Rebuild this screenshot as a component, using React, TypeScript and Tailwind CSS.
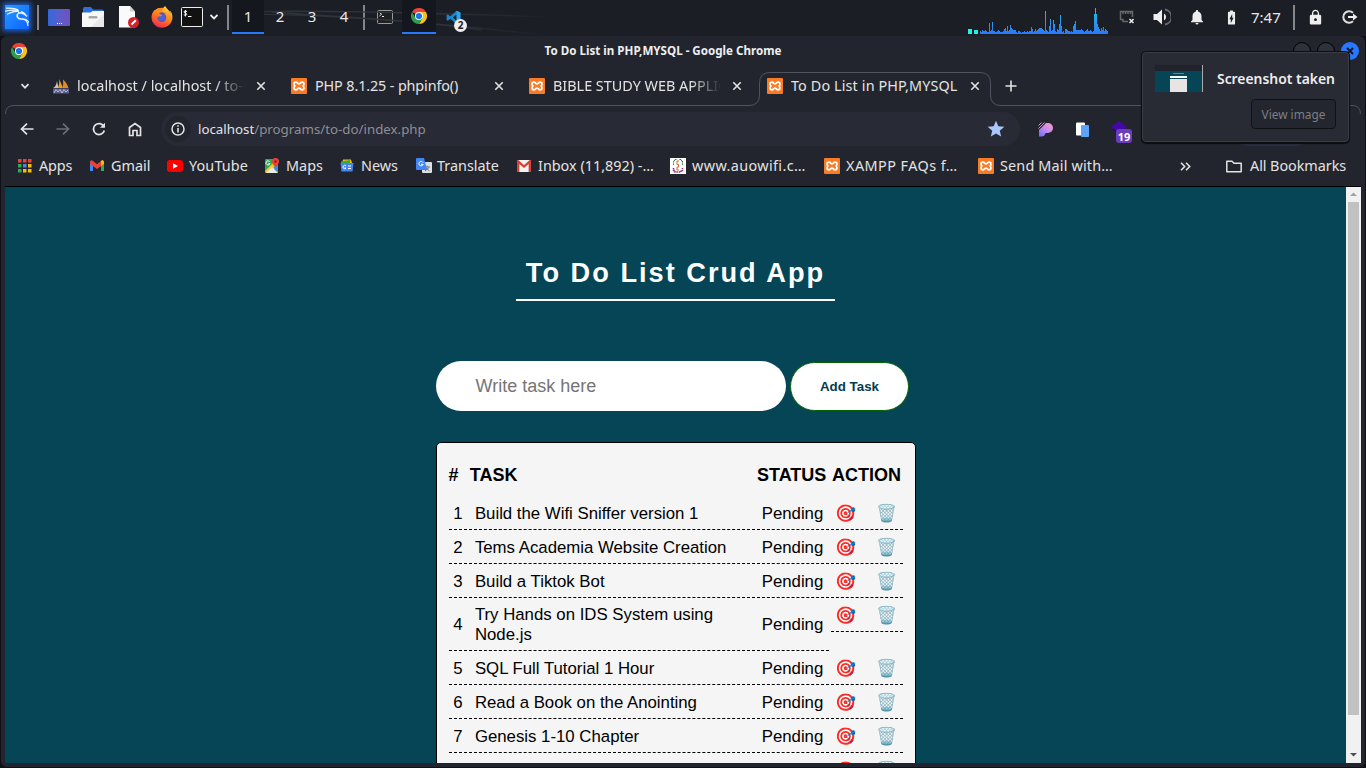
import React from "react";
import { SiKalilinux } from "react-icons/si";
import { FaFirefoxBrowser } from "react-icons/fa";
import { MdLock, MdNotifications, MdBatteryChargingFull, MdStar } from "react-icons/md";

const NOTO = "font-['Noto_Sans',sans-serif]";
const ARIAL = "font-['Liberation_Sans',Arial,sans-serif]";

function Chrome({ size }: { size: number }) {
  return (
    <svg width={size} height={size} viewBox="0 0 48 48">
      <path d="M24 24 L3.2 12 A24 24 0 0 1 44.8 12 Z" fill="#ea4335" />
      <path d="M24 12 H44.8 A24 24 0 0 1 24 48 L34.4 30 Z" fill="#fbc116" />
      <path d="M13.6 30 L3.2 12 A24 24 0 0 0 24 48 L34.4 30 L24 34 Z" fill="#2da04e" />
      <circle cx="24" cy="24" r="12" fill="#fff" />
      <circle cx="24" cy="24" r="9.3" fill="#1a73e8" />
    </svg>
  );
}

function Xampp() {
  return (
    <svg width="16" height="16" viewBox="0 0 16 16">
      <rect width="16" height="16" rx="1" fill="#fb7a24" />
      <path
        d="M5 4.200C6.500 4.200 6.700 6 8 6C9.300 6 9.500 4.200 11 4.200C12.400 4.200 13 5.200 13 6.200C13 7.200 12.400 7.800 11.500 8C12.400 8.200 13 8.800 13 9.800C13 10.800 12.400 11.800 11 11.800C9.500 11.800 9.300 10 8 10C6.700 10 6.500 11.800 5 11.800C3.600 11.800 3 10.800 3 9.800C3 8.800 3.600 8.200 4.500 8C3.600 7.800 3 7.200 3 6.200C3 5.200 3.600 4.200 5 4.200Z"
        fill="none"
        stroke="#fff"
        strokeWidth="1.700"
      />
    </svg>
  );
}

function PhpMyAdmin() {
  return (
    <svg width="16" height="16" viewBox="0 0 16 16">
      <path d="M0 10C2.500 9 3.500 6 4 3L5.500 10Z" fill="#c9c4bd" />
      <path d="M4.500 10C6.500 7 6.500 4 6.200 1L10 10Z" fill="#f29a25" />
      <path d="M9.500 9C10.500 6 10.200 4 10 1.500C13 4 14.500 7 15.500 10H10Z" fill="#e08a22" />
      <path d="M0 10.500H16V15.500H0Z" fill="#5a5f8c" />
      <path d="M1 15L3 11.500L5 14L7 11.500L9 15L11 11.500L13 14L15 12" fill="none" stroke="#b9bbd6" />
    </svg>
  );
}

function Divider() {
  return (
    <div className="flex w-[8px] justify-center">
      <div className="h-[25px] w-[2px] bg-[#85868a]" />
    </div>
  );
}

const load = [
  3, 2, 4, 3, 3, 4, 3, 2, 2, 11, 3, 4, 12, 3, 3, 2, 2, 3, 4, 3, 2, 2, 2, 3, 5, 6, 3, 8, 3, 4, 9, 6, 5, 4, 4, 4, 2, 1, 3, 3, 2, 1, 2, 2, 3, 2, 2, 3,
  2, 3, 3, 7, 5, 2, 3, 5, 3, 4, 5, 6, 6, 6, 5, 4, 3, 23, 4, 3, 2, 8, 15, 3, 4, 14, 10, 3, 2, 5, 4, 10, 19, 8, 2, 3, 1, 5, 5, 4, 3, 3, 2, 3, 2,
  8, 10, 13, 4, 4, 4, 4, 4, 5, 4, 3, 2, 3, 4, 5, 3, 3, 4, 3, 2, 3, 20, 26, 20, 10, 7, 5, 3, 6, 4, 7, 3, 5, 4, 3,
];

function Taskbar() {
  return (
    <div className={`relative flex h-[36px] shrink-0 items-center bg-[#1b1e25] pb-[2px] text-[15px] text-[#e8e8e8] ${NOTO}`}>
      <svg className="absolute left-[232px] top-0" width="320" height="36" viewBox="0 0 320 36" fill="none">
        <linearGradient id="wisp" x1="0" y1="0" x2="320" y2="0" gradientUnits="userSpaceOnUse">
          <stop offset="0" stopColor="#2b3038" />
          <stop offset="0.6" stopColor="#303640" />
          <stop offset="1" stopColor="#1b1e25" />
        </linearGradient>
        <path d="M0 12C80 10 160 12 320 17M0 14C90 14 200 22 320 36M40 12C120 18 180 20 250 30" stroke="url(#wisp)" strokeWidth="1.300" />
      </svg>
      <div className="z-10 flex h-[34px] w-[34px] items-center justify-center">
        <div className="flex h-[24px] w-[24px] items-center justify-center bg-gradient-to-br from-[#2a9bff] to-[#1560ff] shadow-[0_0_5px_2px_#1b62d8]">
          <SiKalilinux size={24} color="#fff" stroke="#fff" strokeWidth={0.7} />
        </div>
      </div>
      <Divider />
      <div className="flex w-[34px] justify-center">
        <div className="flex h-[17px] w-[22px] items-end justify-center gap-px rounded-[1px] bg-gradient-to-r from-[#3268dc] to-[#7152bd] pb-[2px]">
          <i className="h-px w-px bg-white" />
          <i className="h-px w-px bg-white" />
          <i className="h-px w-px bg-white" />
        </div>
      </div>
      <div className="flex w-[34px] justify-center">
        <svg width="22" height="20" viewBox="0 0 22 20">
          <path d="M1 8V1.500Q1 0 2.500 0H9L11 2.500H20.500Q21.500 2.500 21.500 4V8Z" fill="#2d6fe0" />
          <path d="M0 5.500H8.500L10.500 4H22V20H0Z" fill="#f7f7f7" />
          <path d="M22 7V20H9Z" fill="#e8e8e8" />
          <rect x="6.500" y="9" width="9" height="2.500" rx="1.200" fill="#a9a9a9" />
        </svg>
      </div>
      <div className="flex w-[35px] justify-center pl-[3px]">
        <svg width="20" height="22" viewBox="0 0 20 22">
          <path d="M0 0H11L16 5.500V21.500H0Z" fill="#fafafa" />
          <path d="M11 0V5.500H16Z" fill="#cfcfcf" />
          <circle cx="14.500" cy="16.500" r="5.500" fill="#d6202a" />
          <path d="M12.500 18.500L16.800 14.200" stroke="#fff" strokeWidth="2" />
        </svg>
      </div>
      <div className="flex w-[34px] justify-center">
        <div className="flex h-[22px] w-[22px] items-center justify-center rounded-full bg-[radial-gradient(circle_at_48%_52%,#3a70e8_0,#5b50c8_28%,#ff8a1c_34%,#ff8a1c_60%,transparent_62%)]">
          <svg width="0" height="0" className="absolute">
            <linearGradient id="fox" x1="0.8" y1="0" x2="0.3" y2="1">
              <stop offset="0" stopColor="#ffe14a" />
              <stop offset="0.45" stopColor="#ff8a1c" />
              <stop offset="1" stopColor="#f2264f" />
            </linearGradient>
          </svg>
          <FaFirefoxBrowser size={22} className="fill-[url(#fox)]" />
        </div>
      </div>
      <div className="flex w-[25px] justify-center">
        <svg width="22" height="20" viewBox="0 0 22 20" fill="none">
          <rect x="0.500" y="0.500" width="21" height="19" rx="1" fill="#121212" stroke="#eee" />
          <path d="M6 4.500C4.500 3.800 3 4 3 5C3 6.300 5.700 5.800 5.700 7.300C5.700 8.400 4 8.400 2.800 7.800M4.400 3V9.500M7 9.500H10.500" stroke="#fff" />
        </svg>
      </div>
      <div className="flex w-[20px] justify-center">
        <svg width="8" height="6" viewBox="0 0 8 6" fill="none">
          <path d="M0.500 1L4 4.500L7.500 1" stroke="#eee" strokeWidth="1.800" />
        </svg>
      </div>
      <Divider />
      {["1", "2", "3", "4"].map((n, i) => (
        <div
          key={n}
          className={`z-10 flex h-[34px] w-[32px] items-center justify-center border-b-2 ${i === 0 ? "border-[#2777ff] bg-[#15171e]" : "border-transparent"}`}
        >
          {n}
        </div>
      ))}
      <Divider />
      <div className="flex w-[34px] justify-center">
        <svg width="16" height="14" viewBox="0 0 16 14" fill="none">
          <rect x="0.500" y="0.500" width="15" height="13" rx="1" fill="#202020" stroke="#9a9a9a" />
          <path d="M2.500 2.500L4.500 4.200L2.500 6M5 6.500H7" stroke="#eee" />
        </svg>
      </div>
      <div className="z-10 flex h-[34px] w-[34px] items-center justify-center border-b-2 border-[#2777ff] bg-[#15171e]">
        <Chrome size={16} />
      </div>
      <div className="relative flex w-[34px] justify-center">
        <svg width="15" height="15" viewBox="0 0 24 24">
          <path d="M17 1L23 4V20L17 23L7 14L3 17L1 16V8L3 7L7 10Z M17 7L11 12L17 17Z" fill="#1788d0" fillRule="evenodd" />
          <path d="M17 1L23 4V20L17 23Z" fill="#2ea2ec" />
        </svg>
        <div className="absolute left-[18px] top-[9px] flex h-[13px] w-[13px] items-center justify-center rounded-full bg-[#eee] text-[10px] font-bold leading-none text-[#222]">
          2
        </div>
      </div>
      <div className="ml-[498px] flex h-[34px] w-[141px] shrink-0 items-end">
        <svg width="141" height="34" viewBox="0 0 141 34" shapeRendering="crispEdges">
          <linearGradient id="load" x1="0" y1="0" x2="0" y2="34" gradientUnits="userSpaceOnUse">
            <stop offset="0.2" stopColor="#12c8dc" />
            <stop offset="0.65" stopColor="#2a9aea" />
            <stop offset="1" stopColor="#2777ff" />
          </linearGradient>
          <path d="M0 29H4V34H0ZM6 30H10V34H6Z" fill="#19f5e0" />
          <path d={load.map((h, i) => `M${12 + i} 34V${34 - h}h1V34Z`).join("")} fill="url(#load)" />
        </svg>
      </div>
      <div className="flex w-[36px] justify-center">
        <svg width="17" height="14" viewBox="0 0 17 14" fill="none">
          <path d="M9 11.500H4V9.500H1.500V1.500H13.500V7M4 2V4M6.500 2V4M9 2V4M11.500 2V4" stroke="#68696d" strokeWidth="1.500" />
          <path d="M10.500 9L14.500 13M14.500 9L10.500 13" stroke="#eee" strokeWidth="1.500" />
        </svg>
      </div>
      <div className="flex w-[34px] justify-center">
        <svg width="18" height="18" viewBox="0 0 18 18" fill="none">
          <path d="M0.500 6H4L9 1.500V16.500L4 12H0.500Z" fill="#eee" />
          <path d="M11 5.500A4 4 0 0 1 11 12.500Z" fill="#eee" />
          <path d="M12 1.500A7.600 7.600 0 0 1 12 16.500" stroke="#68696d" strokeWidth="1.800" />
        </svg>
      </div>
      <div className="flex w-[35px] justify-center">
        <MdNotifications size={18} color="#eee" />
      </div>
      <div className="flex w-[34px] justify-center">
        <MdBatteryChargingFull size={17} color="#eee" />
      </div>
      <div className="w-[42px] pl-[3px] leading-[34px]">7:47</div>
      <Divider />
      <div className="flex w-[34px] justify-center">
        <MdLock size={17} color="#eee" />
      </div>
      <div className="flex w-[34px] justify-center pl-[2px]">
        <svg width="16" height="14" viewBox="0 0 16 14" fill="none">
          <path d="M11 2.700A5.800 5.800 0 1 0 11 11.300" stroke="#ddd" strokeWidth="2" />
          <path d="M6 7H12" stroke="#eee" strokeWidth="2" />
          <path d="M11 3.500L15.500 7L11 10.500Z" fill="#eee" />
        </svg>
      </div>
    </div>
  );
}

function TitleBar() {
  return (
    <div className={`flex h-[30px] items-center pl-[10px] text-[11.600px] font-bold text-[#eee] ${NOTO}`}>
      <Chrome size={16} />
      <div className="ml-[507px] w-[258px] text-center whitespace-nowrap">To Do List in PHP,MYSQL - Google Chrome</div>
      <div className="ml-auto mr-[6px] flex gap-[6px]">
        <div className="h-[18px] w-[18px] rounded-full border border-black bg-[#2f323d]" />
        <div className="h-[18px] w-[18px] rounded-full border border-black bg-[#2f323d]" />
        <div className="flex h-[18px] w-[18px] items-center justify-center rounded-full bg-[#2777ff]">
          <svg width="8" height="8" viewBox="0 0 8 8">
            <path d="M1 1L7 7M7 1L1 7" stroke="#0d1626" strokeWidth="2" />
          </svg>
        </div>
      </div>
    </div>
  );
}

function Tab({ icon, label, track = "", fade }: { icon: React.ReactNode; label: string; track?: string; fade?: boolean }) {
  return (
    <div className="flex w-[238px] items-center">
      <div className="w-[24px]">{icon}</div>
      <div
        className={`w-[168px] overflow-hidden whitespace-nowrap ${track} ${fade ? "[mask-image:linear-gradient(to_right,#000_82%,transparent)]" : ""}`}
      >
        {label}
      </div>
      <svg className="ml-[11px]" width="10" height="10" viewBox="0 0 10 10">
        <path d="M1.300 1.300L8.700 8.700M8.700 1.300L1.300 8.700" stroke="#e3e3e3" strokeWidth="1.600" />
      </svg>
    </div>
  );
}

function TabStrip() {
  return (
    <div className="relative flex h-[40px] items-center pl-[19px] text-[14.400px] text-[#e3e3e3]">
      <svg className="absolute left-[4px] top-[6px]" width="1358" height="42" viewBox="5 72 1358 42" fill="none">
        <path
          d="M5.500 114Q5.500 105.500 14 105.500H749Q759.500 105.500 759.500 95V83Q759.500 72.500 770 72.500H980Q990.500 72.500 990.500 83V95Q990.500 105.500 1001 105.500H1352Q1360.500 105.500 1360.500 114"
          stroke="#50525c"
        />
      </svg>
      <svg width="10" height="7" viewBox="0 0 10 7" fill="none">
        <path d="M1.500 1.200L5 4.700L8.500 1.200" stroke="#e3e3e3" strokeWidth="1.700" />
      </svg>
      <div className="ml-[23px] flex">
        <Tab icon={<PhpMyAdmin />} label="localhost / localhost / to-do" fade />
        <Tab icon={<Xampp />} label="PHP 8.1.25 - phpinfo()" track="tracking-[-0.13px]" />
        <Tab icon={<Xampp />} label="BIBLE STUDY WEB APPLICATION" fade />
        <Tab icon={<Xampp />} label="To Do List in PHP,MYSQL" track="tracking-[0.12px]" />
      </div>
      <svg width="12" height="12" viewBox="0 0 12 12">
        <path d="M6 0.500V11.500M0.500 6H11.500" stroke="#e3e3e3" strokeWidth="1.600" />
      </svg>
    </div>
  );
}

function Toolbar() {
  return (
    <div className="flex h-[46px] items-center pl-[19px] text-[13.300px]">
      <svg width="14" height="12" viewBox="0 0 14 12" fill="none">
        <path d="M13.500 6H1.500M7 0.700L1.500 6L7 11.300" stroke="#e3e3e3" strokeWidth="1.700" />
      </svg>
      <svg className="ml-[22px]" width="14" height="12" viewBox="0 0 14 12" fill="none">
        <path d="M0.500 6H12.500M7 0.700L12.500 6L7 11.300" stroke="#6c6e75" strokeWidth="1.700" />
      </svg>
      <svg className="ml-[22px]" width="14" height="14" viewBox="0 0 14 14" fill="none">
        <path d="M12 4.800A5.500 5.500 0 1 0 12.300 8.500" stroke="#e3e3e3" strokeWidth="1.800" />
        <path d="M13 0.800V5.800H8Z" fill="#e3e3e3" />
      </svg>
      <svg className="ml-[22px]" width="14" height="15" viewBox="0 0 14 15" fill="none">
        <path d="M1.500 13.500V5.500L7 1.500L12.500 5.500V13.500H9V8.500H5V13.500Z" stroke="#e3e3e3" strokeWidth="1.700" />
      </svg>
      <div className="ml-[19px] flex h-[34px] w-[859px] items-center rounded-full bg-[#282a35] pl-[4px]">
        <div className="flex h-[26px] w-[26px] items-center justify-center rounded-full bg-[#23252e]">
          <svg width="14" height="14" viewBox="0 0 14 14" fill="none">
            <circle cx="7" cy="7" r="6" stroke="#e3e3e3" strokeWidth="1.500" />
            <path d="M7 3.200V4.800M7 6V10.500" stroke="#e3e3e3" strokeWidth="1.600" />
          </svg>
        </div>
        <div className="ml-[7px] pt-[2px] text-[#8d8f95]">
          <span className="text-[#e3e3e3]">localhost</span>/programs/to-do/index.php
        </div>
        <MdStar className="ml-auto mr-[14px]" size={20} color="#a8c7fa" />
      </div>
      <svg className="ml-[18px]" width="15" height="15" viewBox="0 0 15 15">
        <linearGradient id="pst" x1="0" y1="1" x2="1" y2="0">
          <stop offset="0" stopColor="#6a6cf5" />
          <stop offset="0.5" stopColor="#c58af0" />
          <stop offset="1" stopColor="#ff9db8" />
        </linearGradient>
        <path d="M1 8L8 1H10A5 5 0 0 1 10 11H8C7 11 7 14.500 4 14.500H1Z" fill="url(#pst)" />
        <path d="M0.500 3.500L3.500 0.500M0.500 6.500L6.500 0.500" stroke="#dd8fd8" />
      </svg>
      <svg className="ml-[22px]" width="15" height="15" viewBox="0 0 15 15">
        <rect x="1" y="0.500" width="9" height="13" rx="1" fill="#fff" />
        <rect x="6" y="3" width="8" height="12" rx="1" fill="#5da4f8" />
      </svg>
      <div className="relative ml-[21px] h-[20px] w-[26px]">
        <svg width="16" height="18" viewBox="0 0 16 18">
          <path d="M0 8L8 2L16 8L8 14Z" fill="#4209a8" />
          <path d="M0 9L8 13V17Z" fill="#2a0670" />
        </svg>
        <div className="absolute left-[5px] top-[10px] flex h-[14px] w-[16px] items-center justify-center rounded-[3px] bg-[#6b3dbd] text-[11px] font-bold leading-none text-white">
          19
        </div>
      </div>
      <div className="ml-[95px] h-[34px] w-[80px] shrink-0 rounded-full bg-[#272e42]" />
    </div>
  );
}

function AppsIcon() {
  const colors = ["#ea4335", "#ea4335", "#ea4335", "#34a853", "#4285f4", "#fbbc04", "#34a853", "#fbbc04", "#fbbc04"];
  return (
    <svg width="14" height="14" viewBox="0 0 14 14">
      {colors.map((c, i) => (
        <rect key={i} x={(i % 3) * 5} y={Math.floor(i / 3) * 5} width="3.500" height="3.500" fill={c} />
      ))}
    </svg>
  );
}

const bookmarks: { label: string; width: string; icon: React.ReactNode; text: string }[] = [
  { label: "Apps", width: "w-[72px]", text: "ml-[7px] tracking-[-0.1px]", icon: <AppsIcon /> },
  {
    label: "Gmail",
    width: "w-[77px]",
    text: "ml-[7px]",
    icon: (
      <svg width="14" height="12" viewBox="0 0 14 12">
        <path d="M0 2V11H3V5Z" fill="#4285f4" />
        <path d="M14 2V11H11V5Z" fill="#34a853" />
        <path d="M0 1.500Q1.500 -0.500 3 1L7 4.200L11 1Q12.500 -0.500 14 1.500V4L7 9L0 4Z" fill="#ea4335" />
        <path d="M11 1Q12.500 -0.500 14 1.500V4L11 6Z" fill="#fbbc04" />
      </svg>
    ),
  },
  {
    label: "YouTube",
    width: "w-[98px]",
    text: "ml-[6px] tracking-[0.12px]",
    icon: (
      <svg width="16" height="12" viewBox="0 0 16 12">
        <rect width="16" height="12" rx="3" fill="#f00" />
        <path d="M6 3.300V8.700L11 6Z" fill="#fff" />
      </svg>
    ),
  },
  {
    label: "Maps",
    width: "w-[75px]",
    text: "ml-[7px]",
    icon: (
      <svg width="14" height="15" viewBox="0 0 14 15">
        <rect y="1" width="13" height="14" rx="1" fill="#34a853" />
        <path d="M0 13L11 2L13 4V7L5 15H1Z" fill="#fbc52d" />
        <path d="M7 9L13 15H1Z" fill="#e8eaed" />
        <path d="M8.500 9.500L13 5V14Z" fill="#4285f4" />
        <path d="M10.500 0A3.500 3.500 0 0 1 14 3.500C14 6 10.500 9 10.500 9S7 6 7 3.500A3.500 3.500 0 0 1 10.500 0Z" fill="#ea4335" />
        <circle cx="10.500" cy="3.500" r="1.200" fill="#8a1f16" />
        <path d="M4.500 3.500A2 2 0 1 0 5 5.500H3.500" stroke="#fff" fill="none" />
      </svg>
    ),
  },
  {
    label: "News",
    width: "w-[76px]",
    text: "ml-[7px]",
    icon: (
      <svg width="14" height="13" viewBox="0 0 14 13">
        <path d="M3 0.500H11L12 4H2Z" fill="#fbbc04" />
        <path d="M1 2.500L10 1V5H1Z" fill="#34a853" />
        <path d="M0.500 4H13.500L12.500 12.500H1.500Z" fill="#4285f4" />
        <path d="M6 7A1.700 1.700 0 1 0 6 9H4.500M8 7H11M8 9.500H11" stroke="#fff" fill="none" />
      </svg>
    ),
  },
  {
    label: "Translate",
    width: "w-[101px]",
    text: "ml-[5px]",
    icon: (
      <svg width="16" height="16" viewBox="0 0 16 16">
        <rect x="6" y="4" width="10" height="11" rx="1" fill="#dcdfe3" />
        <path d="M8 9H14M11 7.500V9M13 9.500L9 13M10 10L13.500 13" stroke="#70757a" />
        <path d="M1 0H8L11 12H1Q0 12 0 11V1Q0 0 1 0Z" fill="#4285f4" />
        <path d="M7 4.500A2.200 2.200 0 1 0 7.200 6.300H5" stroke="#fff" fill="none" />
      </svg>
    ),
  },
  {
    label: "Inbox (11,892) -…",
    width: "w-[153px]",
    text: "ml-[7px]",
    icon: (
      <svg width="14" height="12" viewBox="0 0 14 12">
        <rect width="14" height="12" rx="1" fill="#f2f2f2" />
        <path d="M1.200 12V1.500L7 6.500L12.800 1.500V12" stroke="#d93c30" strokeWidth="2.300" fill="none" />
      </svg>
    ),
  },
  {
    label: "www.auowifi.c…",
    width: "w-[154px]",
    text: "ml-[6px] tracking-[0.38px]",
    icon: (
      <svg width="16" height="16" viewBox="0 0 16 16">
        <rect width="16" height="16" fill="#fff" />
        <path d="M6.500 1.500H4.500V3H3.500V7M9.500 1.500H11.500V3H12.500V7" stroke="#338033" fill="none" strokeDasharray="1.500 0.800" />
        <path d="M3.500 10V12.500H5V14H11V12.500H12.500V10" stroke="#8b2586" strokeWidth="1.500" fill="none" strokeDasharray="1.500 0.800" />
        <path d="M9 3H7V6.500H8.500V9H7V12H9" stroke="#cf6b28" fill="none" />
      </svg>
    ),
  },
  { label: "XAMPP FAQs f…", width: "w-[154px]", text: "ml-[6px] tracking-[0.45px]", icon: <Xampp /> },
  { label: "Send Mail with…", width: "w-[160px]", text: "ml-[6px] tracking-[0.17px]", icon: <Xampp /> },
];

function Bookmarks() {
  return (
    <div className="flex h-[34px] items-center pb-[6px] pl-[17px] text-[14.400px] text-[#e3e3e3]">
      {bookmarks.map((b) => (
        <div key={b.label} className={`flex shrink-0 items-center whitespace-nowrap ${b.width}`}>
          {b.icon}
          <span className={b.text}>{b.label}</span>
        </div>
      ))}
      <svg className="ml-[42px]" width="11" height="9" viewBox="0 0 11 9" fill="none">
        <path d="M1 0.700L4.700 4.500L1 8.300M6 0.700L9.700 4.500L6 8.300" stroke="#e3e3e3" strokeWidth="1.600" />
      </svg>
      <svg className="ml-[35px]" width="16" height="13" viewBox="0 0 16 13" fill="none">
        <path d="M0.800 11.800V1.200H6L8 3.200H15.200V11.800Z" stroke="#e3e3e3" strokeWidth="1.500" strokeLinejoin="round" />
      </svg>
      <span className="ml-[8px] whitespace-nowrap tracking-[-0.06px]">All Bookmarks</span>
    </div>
  );
}

const tasks = [
  "Build the Wifi Sniffer version 1",
  "Tems Academia Website Creation",
  "Build a Tiktok Bot",
  "Try Hands on IDS System using Node.js",
  "SQL Full Tutorial 1 Hour",
  "Read a Book on the Anointing",
  "Genesis 1-10 Chapter",
];

function TaskRow({ n, task, status }: { n: string; task: string; status: string }) {
  return (
    <div className="mt-[2px] flex items-stretch gap-[2px]">
      <div className="flex w-[18px] items-center justify-center border-b border-dashed border-black pl-[1px]">{n}</div>
      <div className="flex min-h-[32px] w-[286px] items-center border-b border-dashed border-black py-[5px] pl-[6.400px] pr-[25px]">{task}</div>
      <div className="flex w-[72px] items-center justify-center border-b border-dashed border-black">{status}</div>
      <div className="flex h-[32px] w-[72px] items-center justify-between self-start border-b border-dashed border-black pl-[4.400px] pr-[5.600px] text-[17px]">
        <span>🎯</span>
        <span>🗑️</span>
      </div>
    </div>
  );
}

function TaskCard() {
  return (
    <div className="mt-[31px] h-[400px] w-[480px] rounded-[5px] border border-black bg-[#f5f5f5] pl-[12px] pt-[22px] text-[16.800px] leading-[20px] text-black">
      <div className="flex h-[20px] text-[18px] font-bold">
        <div className="w-[21.300px]">#</div>
        <div className="w-[287.200px]">TASK</div>
        <div className="w-[75px]">STATUS</div>
        <div>ACTION</div>
      </div>
      <div className="mt-[13px] w-[454px]">
        {tasks.map((t, i) => (
          <TaskRow key={t} n={String(i + 1)} task={t} status="Pending" />
        ))}
        <TaskRow n="" task="" status="" />
      </div>
    </div>
  );
}

function Page() {
  return (
    <div className={`mx-[4px] flex h-[577px] overflow-hidden border-t border-black bg-[#054556] ${ARIAL}`}>
      <div className="flex flex-1 flex-col items-center">
        <h1 className="mt-[67px] h-[47px] shrink-0 border-b-2 border-white px-[10px] text-[27.200px] font-bold leading-[37px] tracking-[2px] text-white">
          To Do List Crud App
        </h1>
        <div className="mt-[60px] flex w-[480px] shrink-0 items-end gap-[4.500px]">
          <div className="flex h-[50px] w-[350px] items-center rounded-full bg-white pl-[40px] text-[18px] text-[#757575]">Write task here</div>
          <div className="flex h-[49px] w-[119px] items-center justify-center rounded-full border border-[#006400] bg-white text-[13.333px] font-bold text-[#053b4c]">
            Add Task
          </div>
        </div>
        <TaskCard />
      </div>
      <div className="flex w-[15px] flex-col items-center bg-[#f1f1f1]">
        <svg width="15" height="15" viewBox="0 0 15 15">
          <path d="M4 9L7.500 5.500L11 9Z" fill="#a3a3a3" />
        </svg>
        <div className="h-[513px] w-[11px] bg-[#c1c1c1]" />
        <svg className="mt-auto mb-[1px]" width="15" height="15" viewBox="0 0 15 15">
          <path d="M4 6L7.500 9.500L11 6Z" fill="#505050" />
        </svg>
      </div>
    </div>
  );
}

function Notification() {
  return (
    <div className="absolute left-[1141px] top-[51px] h-[92px] w-[209px] rounded-[5px] border border-[#0c0d11] bg-[#282a34] shadow-[inset_0_0_0_1px_#3b3d47,0_1px_1px_#0c0d11]">
      <div className="flex items-start pl-[13px] pt-[13px]">
        <div className="flex h-[27px] w-[48px] flex-col items-center border-r border-[#aaa] bg-[#054556]">
          <div className="h-[6px] w-full shrink-0 bg-[#20232d]" />
          <div className="mt-[2px] h-px w-[11px] shrink-0 bg-[#5d8894]" />
          <div className="mt-[2px] h-[2px] w-[17px] shrink-0 bg-white" />
          <div className="mt-[1px] w-[17px] flex-1 bg-[#e8e4e4]" />
        </div>
        <div className="ml-[14px] mt-[4px] whitespace-nowrap text-[13.900px] font-semibold leading-[20px] text-[#eee]">Screenshot taken</div>
      </div>
      <div className="ml-[109px] mt-[7px] flex h-[30px] w-[85px] items-center justify-center rounded-[4px] border border-[#101116] bg-[#24262f] pt-[2px] text-[11.900px] text-[#7c7e84]">
        View image
      </div>
    </div>
  );
}

export default function App() {
  return (
    <div className={`relative flex h-[768px] w-[1366px] flex-col overflow-hidden bg-[#0e1015] ${NOTO}`}>
      <Taskbar />
      <div className="mx-px h-[731px] rounded-[6px] bg-[#23252e]">
        <TitleBar />
        <TabStrip />
        <Toolbar />
        <Bookmarks />
        <Page />
      </div>
      <Notification />
    </div>
  );
}
